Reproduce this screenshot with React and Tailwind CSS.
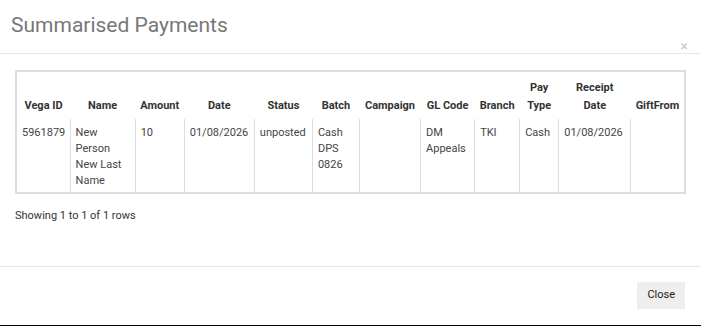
import React from 'react';

const columns = [
  { label: ['Vega ID'], w: 'w-[53px]' },
  { label: ['Name'], w: 'w-[65px]' },
  { label: ['Amount'], w: 'w-[49px]' },
  { label: ['Date'], w: 'w-[70px]' },
  { label: ['Status'], w: 'w-[58px]' },
  { label: ['Batch'], w: 'w-[47px]' },
  { label: ['Campaign'], w: 'w-[61px]' },
  { label: ['GL Code'], w: 'w-[54px]' },
  { label: ['Branch'], w: 'w-[45px]' },
  { label: ['Pay', 'Type'], w: 'w-[39px]' },
  { label: ['Receipt', 'Date'], w: 'w-[72px]' },
  { label: ['GiftFrom'], w: 'w-[53px]' },
];

const rows = [
  ['5961879', 'New Person New Last Name', '10', '01/08/2026', 'unposted', 'Cash DPS 0826', '', 'DM Appeals', 'TKI', 'Cash', '01/08/2026', ''],
];

const App = () => {
  return (
    <div className="w-[701px] h-[326px] bg-white border-b border-black flex flex-col font-['Roboto',sans-serif] text-[11px] text-[#444]">
      {/* header */}
      <div className="relative h-[54px] px-[11px] border-b border-[#e5e5e5]">
        <h2 className="pt-[12px] text-[21px] leading-[26px] text-[#777]">Summarised Payments</h2>
        <span className="absolute right-[13px] top-[39px] text-[14px] leading-[14px] text-[#c8c8c8]">×</span>
      </div>

      {/* body */}
      <div className="px-[15px] pt-[16px] h-[212px]">
        <div className="border-2 border-[#dedede]">
          <table className="w-full table-fixed border-collapse">
            <thead>
              <tr>
                {columns.map((c) => (
                  <th
                    key={c.label.join(' ')}
                    className={`${c.w} pt-[7px] pb-[4px] h-[47px] align-bottom text-center font-bold text-[#333] leading-[18px] whitespace-nowrap`}
                  >
                    {c.label.map((l, k) => (
                      <div key={k}>{l}</div>
                    ))}
                  </th>
                ))}
              </tr>
            </thead>
            <tbody>
              {rows.map((r, i) => (
                <tr key={i}>
                  {r.map((cell, j) => (
                    <td
                      key={j}
                      className="px-[5px] pt-[6px] pb-[3px] align-top leading-[16px] border-l border-[#dedede] first:border-l-0"
                    >
                      {cell}
                    </td>
                  ))}
                </tr>
              ))}
            </tbody>
          </table>
        </div>
        <p className="mt-[14px] text-[#333]">Showing 1 to 1 of 1 rows</p>
      </div>

      {/* footer */}
      <div className="flex justify-end px-[16px] pt-[15px] border-t border-[#e5e5e5]">
        <button className="h-[27px] px-[10px] bg-[#eee] text-[#222] text-[11px]">Close</button>
      </div>
    </div>
  );
};

export default App;
